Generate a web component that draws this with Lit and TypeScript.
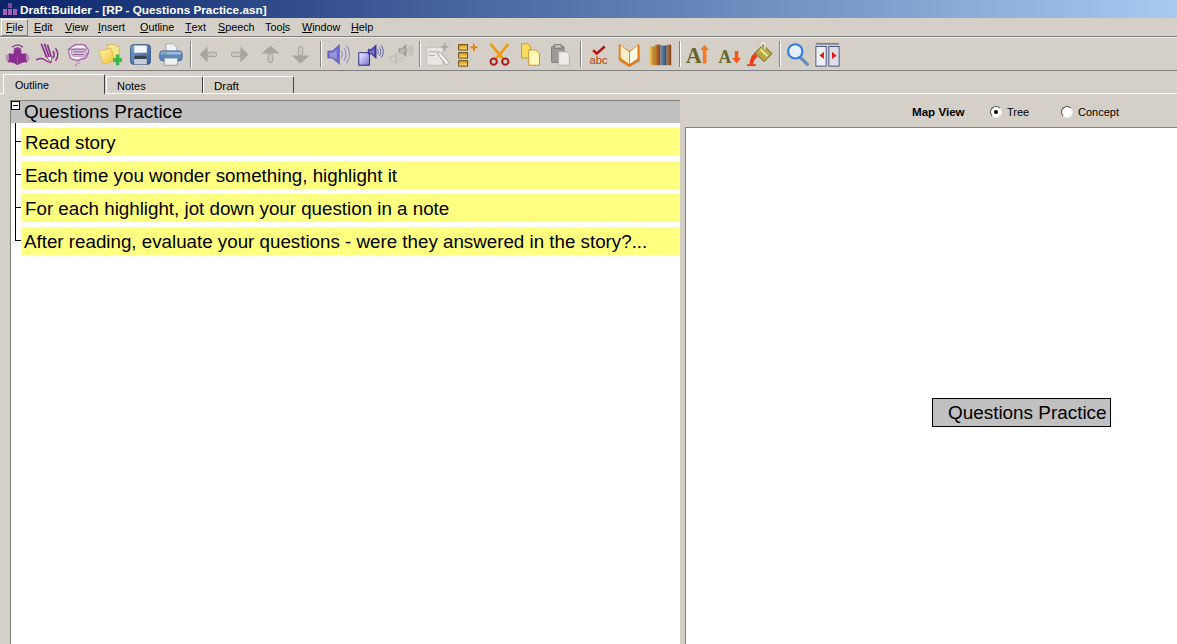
import { LitElement, html, css, svg } from "lit";
import { customElement } from "lit/decorators.js";

const P = "#8a2f90";
const ic = (body: unknown) => html`<svg class="ico" width="25" height="25" viewBox="0 0 28 28">${body}</svg>`;
const speaker = (a: string, b: string, c: string, x = 0, y = 0, s = 1) => svg`<g transform="translate(${x} ${y}) scale(${s})">
  <path d="M2 10h5l8-7v22l-8-7H2z" fill="${a}" stroke="${b}" stroke-width=".7"/>
  <path d="M4 12h4l4-4v12l-4-3H4z" fill="#fff" opacity=".3"/>
  <path d="M17 10q3 4 0 8M20 7q5 7 0 14M23 4q7 10 0 20" fill="none" stroke="${c}" stroke-width="1.200"/></g>`;

const icons = [
  // reader
  ic(svg`<path d="M8 6q6-5.500 12 0M10 8.500q4-3.500 8 0" fill="none" stroke="${P}" stroke-width="1.500"/>
    <circle cx="14" cy="12" r="4.500" fill="${P}"/>
    <path d="M4 13q5-1 10 2 5-3 10-2l1 10q-6-1-11 3-5-4-11-3z" fill="${P}"/>
    <rect x="1" y="14" width="3.500" height="7" rx="1.700" fill="#b98abc"/><rect x="23.500" y="14" width="3.500" height="7" rx="1.700" fill="#b98abc"/>
    <path d="M14 16v9" stroke="#a861ab" stroke-width=".8"/>`),
  // pencil + waves
  ic(svg`<path d="M7 2l6 15M10.500 2l5 14M14 3l4 13" stroke="${P}" stroke-width="1.900" fill="none"/>
    <path d="M13 17l6-1-1 7z" fill="#fff" stroke="${P}"/>
    <path d="M1 20q7-3 10 0t7 3" fill="none" stroke="${P}" stroke-width="1.500"/>
    <path d="M20 10q3 4 0 8M23 7q5 7 0 14" fill="none" stroke="${P}" stroke-width="1.700"/>`),
  // thought bubble
  ic(svg`<path d="M7 5q3-3 8-2 6-1 8 3 4 4 1 8-1 5-7 5-3 2-6 1-6 0-7-5-3-6 3-10z" fill="#fbf6fb" stroke="#b25cb8" stroke-width="1.500"/>
    <rect x="6" y="8" width="17" height="8" rx="3" fill="#d9cddc" stroke="#8f6d96" stroke-width=".8"/>
    <path d="M2 8h21M8 11h13M8 14h12" stroke="#8f5a96" stroke-width="1.100"/>
    <circle cx="14" cy="23" r="1.500" fill="#fff" stroke="#b25cb8"/><circle cx="11" cy="26" r="1" fill="#b25cb8"/>`),
  // folder plus
  ic(svg`<defs><linearGradient id="fo" x1="0" y1="0" x2="1" y2="1"><stop offset="0" stop-color="#fff6b0"/><stop offset="1" stop-color="#f0c030"/></linearGradient></defs>
    <path d="M12 3h8l2 2h3v16H12z" fill="#f7e68a" stroke="#c9a94a" stroke-width=".7"/>
    <path d="M2 10l14-3 4 14-13 4z" fill="url(#fo)" stroke="#d2aa34" stroke-width=".7"/>
    <path d="M18 18h3v-4h4v4h3v4h-3v4h-4v-4h-3z" fill="#3fb84a"/>`),
  // floppy
  ic(svg`<defs><linearGradient id="fl" x1="0" y1="0" x2="1" y2="1"><stop offset="0" stop-color="#7fa6d6"/><stop offset="1" stop-color="#2f5c9e"/></linearGradient></defs>
    <rect x="3" y="3" width="22" height="22" rx="3" fill="url(#fl)" stroke="#27497c"/>
    <rect x="7" y="4" width="14" height="8" fill="#f4f6fa"/>
    <rect x="7" y="15" width="14" height="10" fill="#c3ccd8"/><rect x="7" y="15" width="14" height="4" fill="#3a3f4a"/>`),
  // printer
  ic(svg`<path d="M9 2h8l4 4v8H9z" fill="#f4f4f4" stroke="#8a94a6" stroke-width=".8"/>
    <rect x="2" y="10" width="25" height="11" rx="3" fill="#5b88bd" stroke="#3a5f92"/>
    <rect x="3" y="11" width="23" height="3" rx="1.500" fill="#9dbcdc"/>
    <circle cx="6" cy="13" r="1" fill="#d44"/><circle cx="9" cy="13" r="1" fill="#4a4"/>
    <rect x="7" y="18" width="15" height="8" fill="#eef0f2" stroke="#7d8798" stroke-width=".8"/>`),
  "sep",
  // gray nav
  ic(svg`<path d="M4 14l9-9v18z" fill="#a9a69f"/><rect x="13" y="11.500" width="10" height="5" rx="2" fill="#c9c6bf" stroke="#a3a099"/>`),
  ic(svg`<path d="M24 14l-9-9v18z" fill="#a9a69f"/><rect x="5" y="11.500" width="10" height="5" rx="2" fill="#c9c6bf" stroke="#a3a099"/>`),
  ic(svg`<path d="M14 4l10 9H4z" fill="#a9a69f"/><rect x="11.500" y="13" width="5" height="10" rx="2" fill="#c9c6bf" stroke="#a3a099"/>`),
  ic(svg`<path d="M14 24l10-9H4z" fill="#a9a69f"/><rect x="11.500" y="5" width="5" height="10" rx="2" fill="#c9c6bf" stroke="#a3a099"/>`),
  "sep",
  // speakers
  ic(speaker("#6d68cc", "#5a54b8", "#8f8bd8", 0, 0)),
  ic(svg`<defs><linearGradient id="dc" x1="0" y1="0" x2="1" y2="1"><stop offset="0" stop-color="#f4f4fe"/><stop offset="1" stop-color="#7470d4"/></linearGradient></defs>
    <rect x="2" y="12" width="12" height="14" fill="url(#dc)" stroke="#1c1c7a"/>
    ${speaker("#3e39a8", "#2d2890", "#3e39a8", 11, 1, .7)}`),
  ic(svg`${speaker("#c4c1ba", "#b0ada6", "#bcb9b2", 1, 11, .58)}${speaker("#a09d96", "#94918a", "#a09d96", 11, 1, .62)}`),
  "sep",
  // note gray
  ic(svg`<rect x="2" y="6" width="18" height="20" fill="#e9e7e2" stroke="#c0bdb6"/><path d="M4 11h11M4 15h7" stroke="#a8a59e"/>
    <path d="M14 13l3-2 10 12-3 3z" fill="#f4f3ef" stroke="#9a978f"/>
    <path d="M22 1v9M18 5.500h8" stroke="#a9a69f" stroke-width="2"/>`),
  // list plus
  ic(svg`<defs><linearGradient id="go" x1="0" y1="0" x2="0" y2="1"><stop offset="0" stop-color="#d99a10"/><stop offset="1" stop-color="#ffdf70"/></linearGradient></defs>
    <rect x="3" y="3" width="10" height="6" fill="url(#go)" stroke="#5b3e0c"/><rect x="3" y="12" width="10" height="6" fill="url(#go)" stroke="#5b3e0c"/><rect x="3" y="21" width="10" height="6" fill="url(#go)" stroke="#5b3e0c"/>
    <path d="M20 2v8M16 6h8" stroke="#f07808" stroke-width="2"/>`),
  // scissors
  ic(svg`<path d="M4 2l15 18M24 2L9 20" stroke="#f09a10" stroke-width="3"/>
    <circle cx="7.500" cy="22" r="3.500" fill="#d9d0c4" stroke="#b01c1c" stroke-width="2.300"/><circle cx="20.500" cy="22" r="3.500" fill="#d9d0c4" stroke="#b01c1c" stroke-width="2.300"/>`),
  // copy
  ic(svg`<path d="M4 2h7l3 3v13H4z" fill="#f6dd60" stroke="#c0902a"/><path d="M12 9h8l4 4v13H12z" fill="#fff8b8" stroke="#b8902a"/>`),
  // paste
  ic(svg`<rect x="4" y="5" width="14" height="18" rx="1" fill="#9a9993" stroke="#77756f"/><rect x="7" y="3" width="8" height="4" fill="#c5c3bd" stroke="#77756f"/>
    <path d="M12 11h9l3 3v12H12z" fill="#eeece7" stroke="#b0aea7"/>`),
  "sep",
  // spell
  ic(svg`<path d="M8 9l4 4 9-8" fill="none" stroke="#b81010" stroke-width="2.800"/>
    <text x="14" y="25" text-anchor="middle" class="abc">abc</text>`),
  // book
  ic(svg`<path d="M4 5l10 7 11-7 1 17-12 6-11-6z" fill="#aaa7a0"/><path d="M2 2l12 8 11-8v18l-11 8-12-8z" fill="#e8780a"/><path d="M4 4l9.500 7v13.500L4 18z" fill="#f3efc8"/><path d="M14.500 11L23 4v14.500l-8.500 6z" fill="#fdfbe6" stroke="#b8b48c" stroke-width=".5" stroke-dasharray="1 1"/>`),
  // books
  ic(svg`<defs><linearGradient id="b1" x1="0" y1="0" x2="1" y2="0"><stop offset="0" stop-color="#f1c35c"/><stop offset="1" stop-color="#a8761e"/></linearGradient><linearGradient id="b2" x1="0" y1="0" x2="1" y2="0"><stop offset="0" stop-color="#c47a3c"/><stop offset="1" stop-color="#7a3f18"/></linearGradient><linearGradient id="b3" x1="0" y1="0" x2="1" y2="0"><stop offset="0" stop-color="#6f8bb0"/><stop offset="1" stop-color="#33496a"/></linearGradient></defs>
    <rect x="2" y="5" width="6" height="21" fill="url(#b1)"/><rect x="8" y="3" width="6" height="23" fill="url(#b2)"/>
    <rect x="14" y="4" width="7" height="22" fill="url(#b3)"/><rect x="21" y="3" width="5" height="23" fill="url(#b2)"/>`),
  "sep",
  ic(svg`<text x="10" y="24" text-anchor="middle" class="big">A</text><path d="M22 3l5 6h-3v15h-4V9h-3z" fill="#f47a20"/>`),
  ic(svg`<text x="10" y="23" text-anchor="middle" class="mid">A</text><path d="M21 10h4v8h3l-5 6-5-6h3z" fill="#ef5a20"/>`),
  // paint
  ic(svg`<path d="M9 12l9-9 10 10-9 9z" fill="#b7a940" stroke="#5f5a20"/><path d="M15 8l8 8" stroke="#ece6a0" stroke-width="2.200"/><path d="M16 5q1-6 4-3v6" fill="none" stroke="#f3f3f3" stroke-width="1.300"/>
    <path d="M9 12q-6 4-6 13H0v2h10v-2H7q0-6 5-8z" fill="#ee3a18"/>`),
  "sep",
  // magnifier
  ic(svg`<path d="M17 17l8 8" stroke="#6d8dbd" stroke-width="3.800" stroke-linecap="round"/><circle cx="11.500" cy="10.500" r="8" fill="#e4effb" stroke="#2f7de0" stroke-width="2.400"/>`),
  // split
  ic(svg`<path d="M1 2h26" stroke="#7d8190" stroke-width="2"/><rect x="1" y="5" width="11.500" height="22" fill="#f0f0f0" stroke="#3d4a78"/><rect x="15.500" y="5" width="11.500" height="22" fill="#dcdfe8" stroke="#3d4a78"/>
    <path d="M5 15l5-4v8zM24 15l-5-4v8z" fill="#e01818"/>`),
];

const menu: [string, string, string, number][] = [
  ["F", "ile", "", 27], ["E", "dit", "", 31], ["V", "iew", "", 33], ["I", "nsert", "", 42], ["O", "utline", "", 45],
  ["T", "ext", "", 33], ["S", "peech", "", 47], ["Too", "l", "s", 37], ["W", "indow", "", 49], ["H", "elp", "", 30],
];
const rows = [
  "Read story",
  "Each time you wonder something, highlight it",
  "For each highlight, jot down your question in a note",
  "After reading, evaluate your questions - were they answered in the story?...",
];

@customElement("app-root")
export class AppRoot extends LitElement {
  static styles = css`
    :host { display: flex; flex-direction: column; width: 1177px; height: 644px; overflow: hidden; background: #d4d0c8; font-family: "Liberation Sans", Arial, sans-serif; font-size: 11px; color: #000; }
    .title { height: 18px; flex: none; display: flex; align-items: center; gap: 2px; padding-left: 2px; background: linear-gradient(90deg, #0a246a, #a6caf0); color: #fff; font-weight: 700; font-size: 11.750px; }
    .menu { height: 18px; flex: none; display: flex; align-items: center; padding-left: 1px; border-bottom: 1px solid #808080; box-shadow: 0 1px 0 #eceae5; font-size: 10.800px; }
    .mi { box-sizing: border-box; height: 16px; display: flex; align-items: center; padding: 0 0 0 4px; white-space: pre; flex: none; }
    .mi.hot { border: 1px solid; border-color: #fff #808080 #808080 #fff; height: 17px; margin-right: 2px; }
    .mi u { text-decoration: underline; }
    .tools { height: 33px; flex: none; margin-top: 1px; box-sizing: border-box; display: flex; align-items: center; padding-left: 1.625px; border-bottom: 1px solid #808080; }
    .tb { width: 30.750px; height: 32px; display: flex; align-items: center; justify-content: center; flex: none; }
    .ico { display: block; overflow: visible; }
    .abc { font: 12.500px "Liberation Sans", sans-serif; fill: #b8400a; }
    .big { font: 700 25px "Liberation Serif", serif; fill: #67672c; }
    .mid { font: 700 20px "Liberation Serif", serif; fill: #67672c; }
    .sep { width: 2px; height: 26px; margin: 0 1px 0 4px; flex: none; background: linear-gradient(90deg, #808080 50%, #fff 50%); }
    .tabs { height: 23px; flex: none; box-sizing: border-box; display: flex; align-items: flex-end; padding-left: 3px; border-bottom: 1px solid #fff; }
    .tab { box-sizing: border-box; height: 17px; display: flex; align-items: center; border: 1px solid; border-color: #fff #404040 transparent #fff; border-bottom: 0; border-radius: 2px 2px 0 0; padding: 1px 0 0 10px; }
    .tab.on { width: 102px; height: 20px; margin-bottom: -1px; background: #d4d0c8; padding: 1px 0 0 11px; font-size: 10.700px; }
    .tab.n { width: 97px; margin-left: 1px; }
    .tab.d { width: 91px; font-size: 11.500px; }
    .main { flex: 1; min-height: 0; display: flex; }
    .left { width: 670px; margin: 6px 0 0 10px; box-sizing: border-box; flex: none; background: #fff; border-left: 1px solid #808080; }
    .head { height: 23px; box-sizing: border-box; background: #c0c0c0; border-top: 1px solid #808080; display: flex; font: 18.900px "Liberation Sans", Arial, sans-serif; align-items: center; line-height: 24px; }
    .box { width: 9px; height: 9px; box-sizing: border-box; flex: none; align-self: flex-start; margin: 0 4px 0 0; border: 1px solid #000; background: #fff; display: flex; align-items: center; justify-content: center; }
    .box i { display: block; width: 5px; height: 1px; background: #000; }
    .item { display: flex; height: 33px; margin-left: 4px; }
    .link { width: 6px; flex: none; display: flex; flex-direction: column; }
    .up { height: 19px; box-sizing: border-box; border-left: 1px solid #000; border-bottom: 1px solid #000; }
    .dn { flex: 1; border-left: 1px solid #000; }
    .item:last-child .dn { border-left: 0; }
    .row { flex: 1; margin-top: 5px; height: 28px; box-sizing: border-box; background: #ffff80; display: flex; align-items: center; padding: 2px 0 0 4px; font: 18.750px "Liberation Sans", Arial, sans-serif; white-space: nowrap; }
    .item:last-child .row { padding-left: 3px; }
    .right { flex: 1; display: flex; flex-direction: column; margin-left: 5px; min-width: 0; }
    .mv { height: 33px; flex: none; display: flex; align-items: center; padding: 2px 0 0 227px; box-sizing: border-box; }
    .mv b { font-size: 11.600px; width: 78px; flex: none; }
    .radio { width: 12px; height: 12px; box-sizing: border-box; border-radius: 50%; border: 1px solid; border-color: #505050 #e8e8e8 #e8e8e8 #505050; background: #fff; display: flex; align-items: center; justify-content: center; margin-right: 5px; flex: none; }
    .radio.on::after { content: ""; width: 4px; height: 4px; border-radius: 50%; background: #000; }
    .lbl { width: 54px; }
    .canvas { flex: 1; position: relative; background: #fff; border-top: 1px solid #808080; border-left: 1px solid #808080; }
    .node { position: absolute; left: 246px; top: 270px; width: 179px; height: 29px; box-sizing: border-box; border: 1px solid #000; background: #c0c0c0; display: flex; align-items: center; padding-left: 15px; font: 18.900px "Liberation Sans", Arial, sans-serif; white-space: nowrap; }
  `;

  render() {
    return html`
      <div class="title">
        <svg width="16" height="16" viewBox="0 0 16 16"><rect x="6" y="2" width="4" height="5" fill="#8a3f9a"/><rect x="1" y="8" width="4" height="6" fill="#a05fb0"/><rect x="6" y="8" width="4" height="6" fill="#a05fb0"/><rect x="11" y="8" width="4" height="6" fill="#a05fb0"/></svg>
        <span>Draft:Builder - [RP - Questions Practice.asn]</span>
      </div>
      <div class="menu">
        ${menu.map((m, i) => html`<div class="mi ${i === 0 ? "hot" : ""}" style="width:${m[3]}px">${m[2] ? html`${m[0]}<u>${m[1]}</u>${m[2]}` : html`<u>${m[0]}</u>${m[1]}`}</div>`)}
      </div>
      <div class="tools">
        ${icons.map((c) => (c === "sep" ? html`<div class="sep"></div>` : html`<div class="tb">${c}</div>`))}
      </div>
      <div class="tabs">
        <div class="tab on">Outline</div>
        <div class="tab n">Notes</div>
        <div class="tab d">Draft</div>
      </div>
      <div class="main">
        <div class="left">
          <div class="head"><span class="box"><i></i></span>Questions Practice</div>
          ${rows.map((r) => html`<div class="item"><div class="link"><div class="up"></div><div class="dn"></div></div><div class="row">${r}</div></div>`)}
        </div>
        <div class="right">
          <div class="mv">
            <b>Map View</b>
            <span class="radio on"></span><span class="lbl">Tree</span>
            <span class="radio"></span><span>Concept</span>
          </div>
          <div class="canvas"><div class="node">Questions Practice</div></div>
        </div>
      </div>
    `;
  }
}
